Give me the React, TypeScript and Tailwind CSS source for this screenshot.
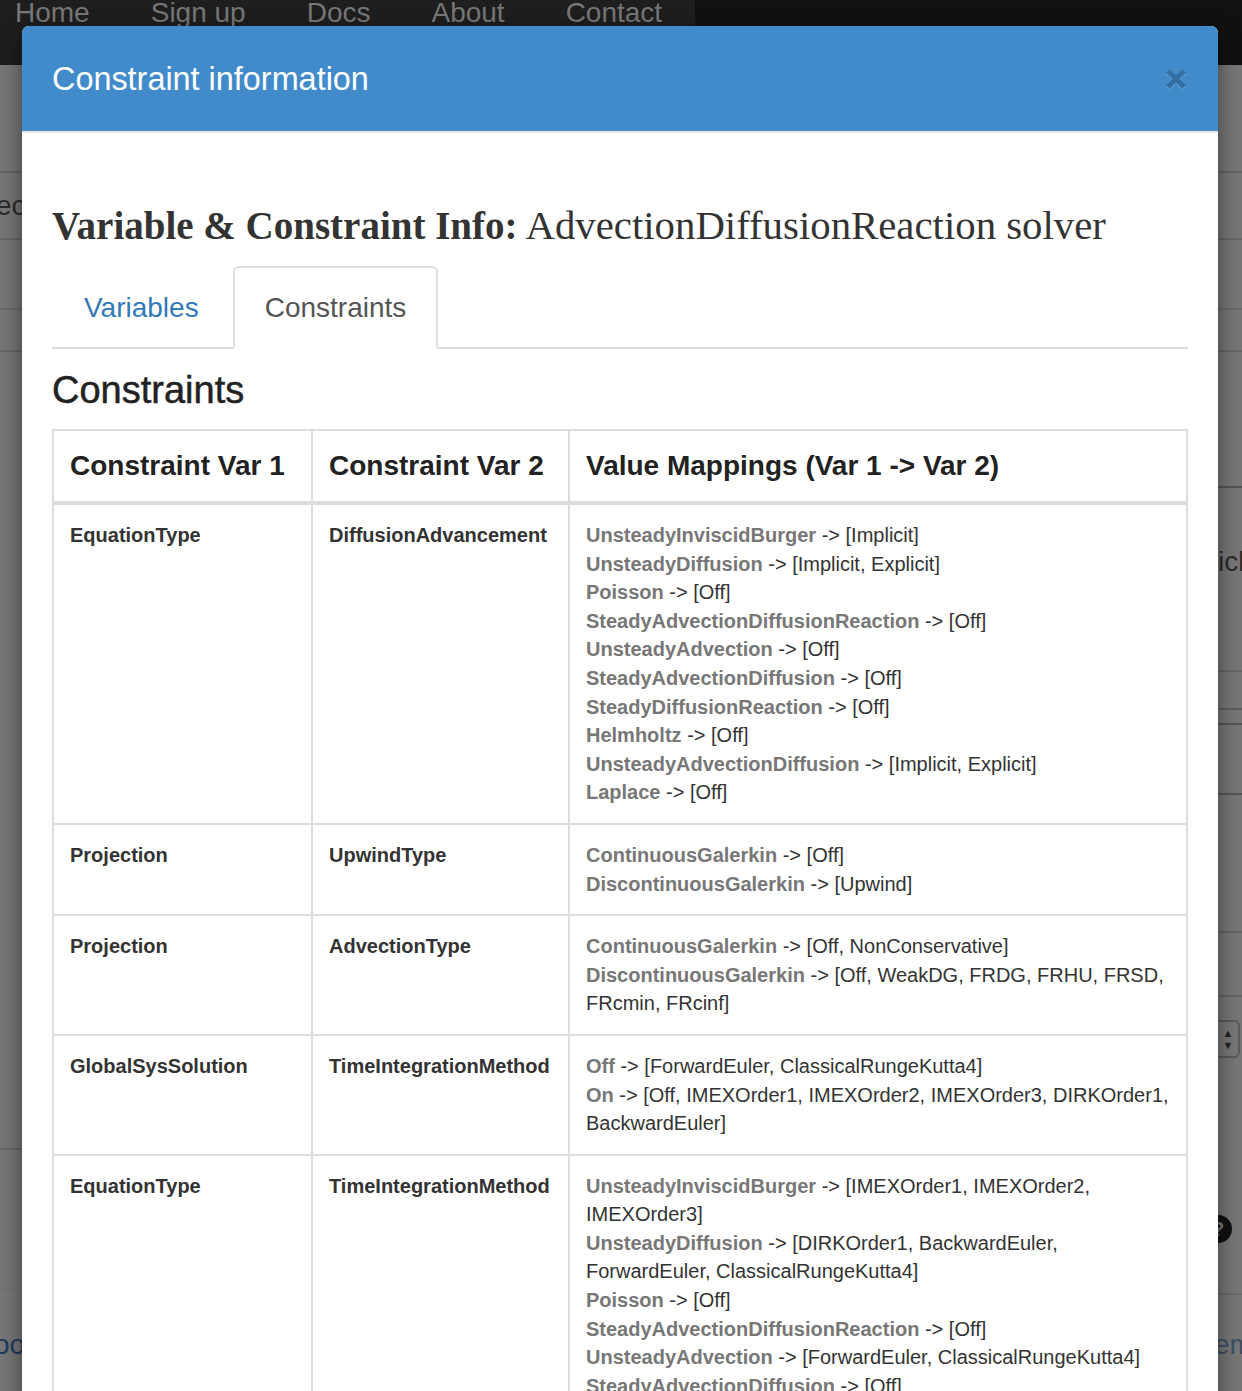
import { Fragment } from 'react'

type Line = [string | null, string]

interface ConstraintRow {
  var1: string
  var2: string
  lines: Line[]
}

const rows: ConstraintRow[] = [
  {
    var1: 'EquationType',
    var2: 'DiffusionAdvancement',
    lines: [
      ['UnsteadyInviscidBurger', '-> [Implicit]'],
      ['UnsteadyDiffusion', '-> [Implicit, Explicit]'],
      ['Poisson', '-> [Off]'],
      ['SteadyAdvectionDiffusionReaction', '-> [Off]'],
      ['UnsteadyAdvection', '-> [Off]'],
      ['SteadyAdvectionDiffusion', '-> [Off]'],
      ['SteadyDiffusionReaction', '-> [Off]'],
      ['Helmholtz', '-> [Off]'],
      ['UnsteadyAdvectionDiffusion', '-> [Implicit, Explicit]'],
      ['Laplace', '-> [Off]'],
    ],
  },
  {
    var1: 'Projection',
    var2: 'UpwindType',
    lines: [
      ['ContinuousGalerkin', '-> [Off]'],
      ['DiscontinuousGalerkin', '-> [Upwind]'],
    ],
  },
  {
    var1: 'Projection',
    var2: 'AdvectionType',
    lines: [
      ['ContinuousGalerkin', '-> [Off, NonConservative]'],
      ['DiscontinuousGalerkin', '-> [Off, WeakDG, FRDG, FRHU, FRSD,'],
      [null, 'FRcmin, FRcinf]'],
    ],
  },
  {
    var1: 'GlobalSysSolution',
    var2: 'TimeIntegrationMethod',
    lines: [
      ['Off', '-> [ForwardEuler, ClassicalRungeKutta4]'],
      ['On', '-> [Off, IMEXOrder1, IMEXOrder2, IMEXOrder3, DIRKOrder1,'],
      [null, 'BackwardEuler]'],
    ],
  },
  {
    var1: 'EquationType',
    var2: 'TimeIntegrationMethod',
    lines: [
      ['UnsteadyInviscidBurger', '-> [IMEXOrder1, IMEXOrder2,'],
      [null, 'IMEXOrder3]'],
      ['UnsteadyDiffusion', '-> [DIRKOrder1, BackwardEuler,'],
      [null, 'ForwardEuler, ClassicalRungeKutta4]'],
      ['Poisson', '-> [Off]'],
      ['SteadyAdvectionDiffusionReaction', '-> [Off]'],
      ['UnsteadyAdvection', '-> [ForwardEuler, ClassicalRungeKutta4]'],
      ['SteadyAdvectionDiffusion', '-> [Off]'],
      ['SteadyDiffusionReaction', '-> [Off]'],
      ['Helmholtz', '-> [Off]'],
      ['UnsteadyAdvectionDiffusion', '-> [IMEXOrder1, IMEXOrder2,'],
      [null, 'IMEXOrder3]'],
      ['Laplace', '-> [Off]'],
    ],
  },
]

const navItems = ['Home', 'Sign up', 'Docs', 'About', 'Contact']

function Navbar() {
  return (
    <div className="flex h-[65px] bg-[#111]">
      <ul className="flex h-full w-[695px] gap-[61px] bg-[#1e1e1e] pl-[15px]">
        {navItems.map((item) => (
          <li key={item} className="-mt-[7px] text-[28px] leading-[40px] text-[#777]">
            {item}
          </li>
        ))}
      </ul>
    </div>
  )
}

// page content that peeks out either side of the modal
function LeftStrip() {
  return (
    <div className="w-[22px] overflow-hidden">
      <div className="h-[108px] border-b-2 border-[#666]" />
      <div className="flex h-[67px] items-center border-b-2 border-[#666]">
        <span className="-ml-[4px] text-[28px] text-[#2b2b2b]">ect</span>
      </div>
      <div className="h-[70px] border-b-2 border-[#6a6a6a]" />
      <div className="h-[42px] border-b-2 border-[#666]" />
      <div className="h-[798px] border-b-2 border-[#666]" />
      <div className="h-[140px] border-b border-[#6e6e6e]" />
      <div className="flex h-[110px] items-center">
        <span className="-ml-[6px] text-[28px] text-[#1d3c5e]">ool</span>
      </div>
    </div>
  )
}

function RightStrip() {
  return (
    <div className="w-[24px] overflow-hidden">
      <div className="h-[108px] border-b-2 border-[#666]" />
      <div className="h-[67px] border-b-2 border-[#666]" />
      <div className="h-[70px] border-b-2 border-[#6a6a6a]" />
      <div className="h-[42px] border-b-2 border-[#666]" />
      <div className="h-[136px] border-b-2 border-[#555]" />
      <div className="flex h-[94px] items-end">
        <span className="text-[28px] leading-[40px] text-[#2b2b2b]">ick</span>
      </div>
      <div className="h-[90px] border-b-2 border-[#666]" />
      <div className="h-[38px] border-b-2 border-[#5e5e5e]" />
      <div className="h-[15px] border-b-2 border-[#555]" />
      <div className="h-[70px] border-b-2 border-[#555]" />
      <div className="h-[138px] border-b-2 border-[#666]" />
      <div className="h-[64px] border-b-2 border-[#666]" />
      <div className="mt-[23px] flex h-[38px] w-[22px] flex-col items-center justify-center rounded-r-[6px] border-2 border-l-0 border-[#5a5a5a] text-[11px] leading-[12px] text-[#222]">
        <span>▲</span>
        <span>▼</span>
      </div>
      <div className="mt-[157px] -ml-[14px] flex h-[28px] w-[28px] items-center justify-center rounded-full bg-[#111] text-[20px] font-bold text-[#777]">
        ?
      </div>
      <div className="mt-[50px] border-t-2 border-[#6a6a6a]" />
      <div className="flex h-[100px] items-center">
        <span className="-ml-[4px] text-[28px] text-[#3a4f66]">em</span>
      </div>
    </div>
  )
}

function CloseButton() {
  return (
    <button type="button" aria-label="Close" className="relative h-[24px] w-[24px] opacity-20">
      <svg viewBox="0 0 24 24" className="absolute left-0 top-[1px] h-[24px] w-[24px]">
        <path d="M4 4 L20 20 M20 4 L4 20" stroke="#fff" strokeWidth="5" />
      </svg>
      <svg viewBox="0 0 24 24" className="absolute left-0 top-0 h-[24px] w-[24px]">
        <path d="M4 4 L20 20 M20 4 L4 20" stroke="#000" strokeWidth="5" />
      </svg>
    </button>
  )
}

function Tabs() {
  return (
    <div className="mt-[16px] flex border-b-2 border-[#ddd]">
      <div className="-mb-[2px] mr-[2px] rounded-t-[6px] border-2 border-transparent px-[30px] py-[20px] text-[28px] leading-[39px] text-[#337ab7]">
        Variables
      </div>
      <div className="-mb-[2px] rounded-t-[6px] border-2 border-[#ddd] border-b-white bg-white px-[30px] py-[20px] text-[28px] leading-[39px] text-[#555]">
        Constraints
      </div>
    </div>
  )
}

function ConstraintsTable() {
  return (
    <table className="w-full table-fixed border-collapse border-2 border-[#ddd] text-left">
      <colgroup>
        <col className="w-[259px]" />
        <col className="w-[257px]" />
        <col />
      </colgroup>
      <thead>
        <tr>
          {['Constraint Var 1', 'Constraint Var 2', 'Value Mappings (Var 1 -> Var 2)'].map((h) => (
            <th
              key={h}
              className="border-2 border-b-4 border-[#ddd] px-[16px] py-[16px] align-bottom text-[28px] font-bold leading-[38px] text-[#222]"
            >
              {h}
            </th>
          ))}
        </tr>
      </thead>
      <tbody>
        {rows.map((row, i) => (
          <tr key={i}>
            <td className="border-2 border-[#ddd] px-[16px] py-[16px] align-top text-[20px] font-bold leading-[28.6px] text-[#333]">
              {row.var1}
            </td>
            <td className="border-2 border-[#ddd] px-[16px] py-[16px] align-top text-[20px] font-bold leading-[28.6px] text-[#333]">
              {row.var2}
            </td>
            <td className="border-2 border-[#ddd] px-[16px] py-[16px] align-top text-[20px] leading-[28.6px] text-[#333]">
              {row.lines.map(([key, rest], j) => (
                <div key={j} className="whitespace-nowrap">
                  {key ? (
                    <Fragment>
                      <b className="font-bold text-[#777]">{key}</b> {rest}
                    </Fragment>
                  ) : (
                    rest
                  )}
                </div>
              ))}
            </td>
          </tr>
        ))}
      </tbody>
    </table>
  )
}

export default function App() {
  return (
    <div className="relative h-[1391px] overflow-hidden bg-[#777] font-['Liberation_Sans',Arial,sans-serif]">
      <Navbar />
      <div className="flex justify-between">
        <LeftStrip />
        <RightStrip />
      </div>

      <div className="absolute left-[22px] top-[26px] w-[1196px] rounded-t-[7px] bg-white shadow-[0_7px_21px_rgba(0,0,0,0.5)]">
        <div className="flex h-[107px] items-center justify-between rounded-t-[7px] border-b-2 border-[#e5e5e5] bg-[#428bca] px-[30px]">
          <h4 className="text-[32.4px] leading-[40px] text-white">Constraint information</h4>
          <CloseButton />
        </div>

        <div className="px-[30px] pt-[69px]">
          <h1 className="font-['Liberation_Serif','Times_New_Roman',serif] text-[40px] leading-[48px] text-[#333]">
            <b className="text-[39px] font-bold">Variable &amp; Constraint Info:</b>
            <span className="text-[40.8px]"> AdvectionDiffusionReaction solver</span>
          </h1>
          <Tabs />
          <h3 className="mb-[19px] mt-[21px] text-[38px] leading-[40px] text-[#222] [-webkit-text-stroke:0.5px_#222]">
            Constraints
          </h3>
          <ConstraintsTable />
        </div>
      </div>
    </div>
  )
}
